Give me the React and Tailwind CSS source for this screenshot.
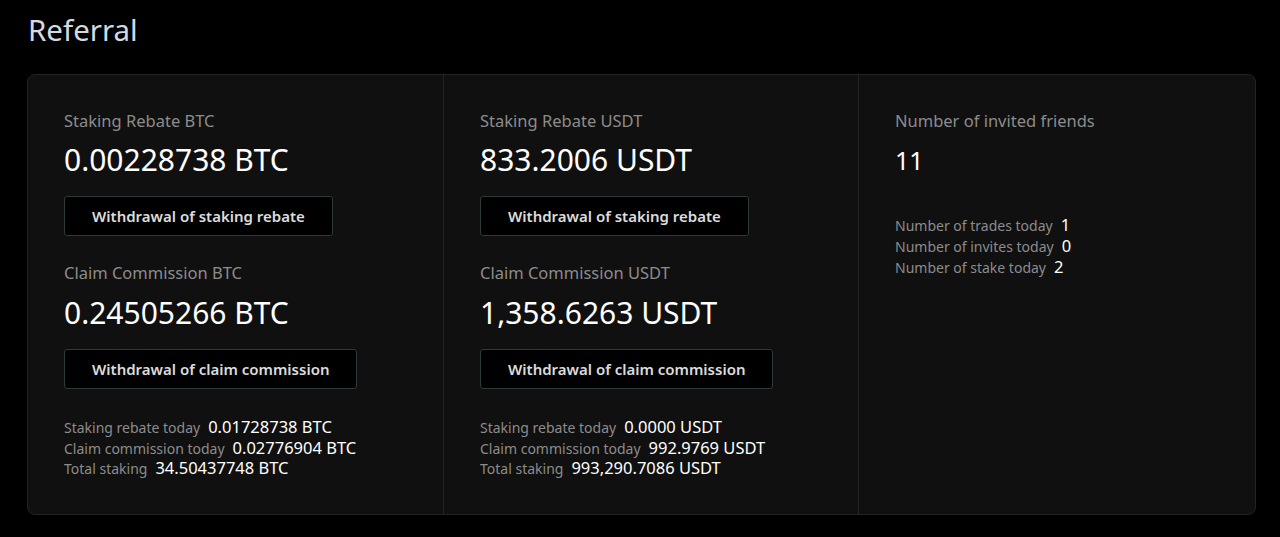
export default function App() {
  const font = { fontFamily: '"Noto Sans", "Open Sans", sans-serif' }

  const columns = [
    {
      coin: 'BTC',
      rebate: '0.00228738 BTC',
      commission: '0.24505266 BTC',
      stats: [
        ['Staking rebate today', '0.01728738 BTC'],
        ['Claim commission today', '0.02776904 BTC'],
        ['Total staking', '34.50437748 BTC'],
      ],
    },
    {
      coin: 'USDT',
      rebate: '833.2006 USDT',
      commission: '1,358.6263 USDT',
      stats: [
        ['Staking rebate today', '0.0000 USDT'],
        ['Claim commission today', '992.9769 USDT'],
        ['Total staking', '993,290.7086 USDT'],
      ],
    },
  ]

  const friends = [
    ['Number of trades today', '1'],
    ['Number of invites today', '0'],
    ['Number of stake today', '2'],
  ]

  return (
    <div className="min-h-[537px] w-full bg-black px-[27px] pt-[10px] pb-[22px]" style={font}>
      <h1 className="h-[40px] pl-px text-[29.5px] leading-[40px] text-[#d4dae0]">Referral</h1>

      <div className="mt-[24px] flex h-[441px] w-[1229px] rounded-[8px] border border-[#232323] bg-[#101010]">
        {columns.map((col, i) => (
          <div
            key={col.coin}
            className={'flex flex-col border-r border-[#232323] pl-[36px] pt-[34px] ' + (i === 0 ? 'w-[416px]' : 'w-[415px]')}
          >
            <div className="text-[16.5px] leading-[24px] text-[#8c8c8c]">Staking Rebate {col.coin}</div>
            <div className="mt-[7px] text-[30px] leading-[40px] text-white">{col.rebate}</div>
            <button className="mt-[16px] h-[40px] w-fit rounded-[3px] border border-[#2b3a3a] bg-black px-[27px] text-[15px] font-semibold text-[#dcdcdc]">
              Withdrawal of staking rebate
            </button>
            <div className="mt-[25px] text-[16.5px] leading-[24px] text-[#8c8c8c]">Claim Commission {col.coin}</div>
            <div className="mt-[8px] text-[30px] leading-[40px] text-white">{col.commission}</div>
            <button className="mt-[16px] h-[40px] w-fit rounded-[3px] border border-[#2b3a3a] bg-black px-[27px] text-[15px] font-semibold text-[#dcdcdc]">
              Withdrawal of claim commission
            </button>
            <div className="mt-[28px] flex flex-col">
              {col.stats.map(([label, value]) => (
                <div key={label} className="flex h-[20.5px] items-baseline gap-[8px] leading-[20px]">
                  <span className="text-[14px] text-[#8c8c8c]">{label}</span>
                  <span className="text-[16.5px] text-white">{value}</span>
                </div>
              ))}
            </div>
          </div>
        ))}

        <div className="flex flex-1 flex-col pl-[36px] pt-[34px]">
          <div className="text-[16.5px] leading-[24px] text-[#8c8c8c]">Number of invited friends</div>
          <div className="mt-[7px] text-[25px] leading-[40px] text-white">11</div>
          <div className="mt-[35px] flex flex-col">
            {friends.map(([label, value]) => (
              <div key={label} className="flex h-[21px] items-baseline gap-[8px] leading-[20px]">
                <span className="text-[14px] text-[#8c8c8c]">{label}</span>
                <span className="text-[16.5px] text-white">{value}</span>
              </div>
            ))}
          </div>
        </div>
      </div>
    </div>
  )
}
